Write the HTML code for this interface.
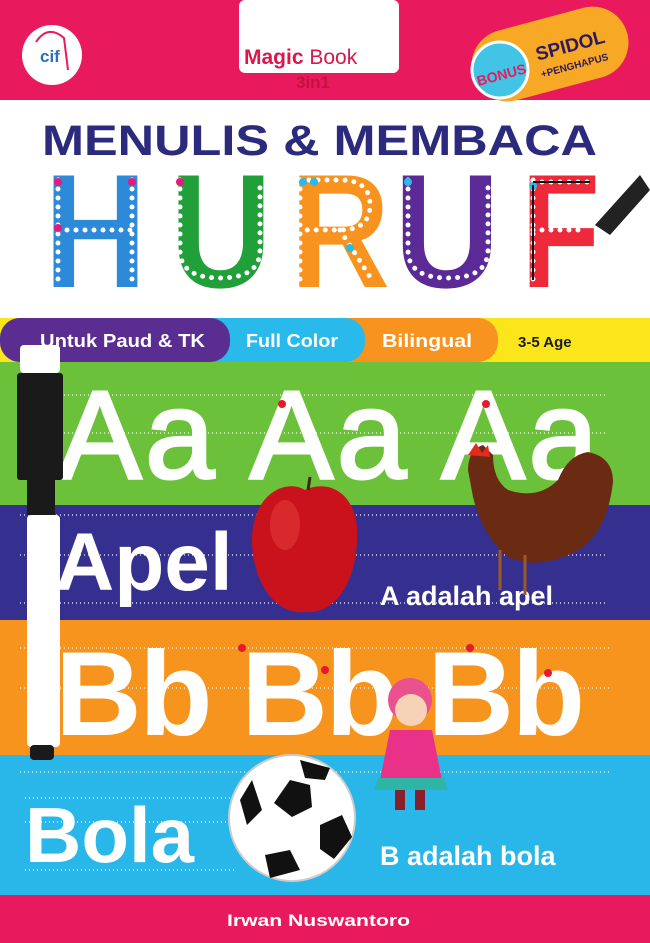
<!DOCTYPE html><html><head><meta charset="utf-8"><style>body{margin:0;width:650px;height:943px;overflow:hidden}svg{display:block}</style></head><body>
<svg width="650" height="943" viewBox="0 0 650 943" font-family="Liberation Sans, sans-serif">
<rect width="650" height="943" fill="#e8195d"/>
<rect x="0" y="100" width="650" height="220" fill="#fff"/>
<!-- logo -->
<circle cx="52" cy="55" r="30" fill="#fff"/>
<path d="M36 42 q12 -18 28 -4 l4 32" fill="none" stroke="#e8195d" stroke-width="2"/>
<text x="40" y="62" font-size="17" font-weight="bold" fill="#2c6fc0">cif</text>
<!-- magic book -->
<rect x="239" y="0" width="160" height="73" rx="6" fill="#fff"/>
<text x="244" y="64" font-size="21" fill="#d8174e" font-weight="bold">Magic <tspan font-weight="normal">Book</tspan></text>
<text x="296" y="88" font-size="17" font-weight="bold" fill="#c8103e">3in1</text>
<!-- bonus -->
<rect x="470" y="18" width="160" height="72" rx="36" fill="#f7a824" transform="rotate(-15 550 54)"/>
<circle cx="500" cy="70" r="28" fill="#41c4e5" stroke="#fff" stroke-width="3"/>
<text x="476" y="80" font-size="14" font-weight="bold" fill="#e8195d" transform="rotate(-15 500 74)">BONUS</text>
<text x="536" y="52" font-size="19" font-weight="bold" fill="#2b1a5e" transform="rotate(-15 570 50)">SPIDOL</text>
<text x="540" y="70" font-size="10" font-weight="bold" fill="#2b1a5e" transform="rotate(-15 570 66)">+PENGHAPUS</text>
<!-- title -->
<text x="42" y="155" font-size="43" font-weight="bold" fill="#2b2a7c" textLength="555" lengthAdjust="spacingAndGlyphs">MENULIS &amp; MEMBACA</text>
<g font-size="162" font-weight="bold" stroke-width="3">
<text x="44" y="287" fill="#2c8ad8" textLength="103" lengthAdjust="spacingAndGlyphs">H</text>
<text x="170" y="287" fill="#21a03a" textLength="102" lengthAdjust="spacingAndGlyphs">U</text>
<text x="290" y="287" fill="#f8931f" textLength="100" lengthAdjust="spacingAndGlyphs">R</text>
<text x="394" y="287" fill="#5c2a96" textLength="106" lengthAdjust="spacingAndGlyphs">U</text>
<text x="521" y="287" fill="#ee2a3a" textLength="79" lengthAdjust="spacingAndGlyphs">F</text>
</g>
<g stroke="#fff" stroke-width="5" stroke-dasharray="0 9" stroke-linecap="round" fill="none">
<path d="M58 180 V280 M132 180 V280 M58 230 H132 M180 180 V250 q0 28 40 28 q40 0 40 -28 V180 M300 180 V280 M300 180 H340 q30 0 30 25 q0 25 -30 25 H300 M340 230 L372 280 M408 180 V250 q0 28 40 28 q40 0 40 -28 V180 M533 180 V280 M533 182 H590 M533 230 H580"/>
</g>
<g fill="#e8197a"><circle cx="58" cy="182" r="4"/><circle cx="132" cy="182" r="4"/><circle cx="58" cy="228" r="4"/><circle cx="180" cy="182" r="4"/></g>
<g fill="#29b9eb"><circle cx="303" cy="182" r="4"/><circle cx="314" cy="182" r="4"/><circle cx="350" cy="248" r="4"/><circle cx="408" cy="182" r="4"/><circle cx="533" cy="186" r="4"/></g>
<path d="M533 185 V280 M533 182 H590" stroke="#111" stroke-width="2" fill="none"/>
<path d="M595 225 L640 175 L650 190 L610 235 Z" fill="#222"/>
<!-- label band -->
<rect x="0" y="318" width="650" height="44" fill="#fbe51b"/>
<rect x="0" y="318" width="498" height="44" rx="20" fill="#f7931e"/>
<rect x="0" y="318" width="365" height="44" rx="20" fill="#29b9eb"/>
<rect x="0" y="318" width="230" height="44" rx="20" fill="#5b2d91"/>
<g font-size="18" font-weight="bold">
<text x="40" y="347" fill="#fff" textLength="165" lengthAdjust="spacingAndGlyphs">Untuk Paud &amp; TK</text>
<text x="246" y="347" fill="#fff" textLength="92" lengthAdjust="spacingAndGlyphs">Full Color</text>
<text x="382" y="347" fill="#fff" textLength="90" lengthAdjust="spacingAndGlyphs">Bilingual</text>
<text x="518" y="347" fill="#1a1a1a" font-size="15">3-5 Age</text>
</g>
<!-- bands -->
<rect x="0" y="362" width="650" height="143" fill="#6cc13a"/>
<rect x="0" y="505" width="650" height="115" fill="#35308f"/>
<rect x="0" y="620" width="650" height="135" fill="#f7941d"/>
<rect x="0" y="755" width="650" height="140" fill="#29b7ea"/>
<g stroke="#fff" stroke-width="1.5" stroke-dasharray="1 3" opacity="0.8">
<path d="M20 395 H605 M20 433 H605 M20 515 H605 M20 555 H605 M20 603 H605 M20 648 H610 M20 688 H610 M20 772 H610 M25 798 H235 M25 822 H235 M25 870 H235"/>
</g>
<g fill="#fff" font-weight="bold">
<text x="58" y="478" font-size="125" textLength="540" lengthAdjust="spacing" font-weight="normal" stroke="#fff" stroke-width="3">Aa Aa Aa</text>
<text x="55" y="590" font-size="82">Apel</text>
<text x="380" y="605" font-size="27">A adalah apel</text>
<text x="55" y="735" font-size="120" textLength="530" lengthAdjust="spacing">Bb Bb Bb</text>
<text x="25" y="862" font-size="78">Bola</text>
<text x="380" y="865" font-size="27">B adalah bola</text>
</g>
<g fill="#e8192c"><circle cx="282" cy="404" r="4"/><circle cx="486" cy="404" r="4"/><circle cx="242" cy="648" r="4"/><circle cx="470" cy="648" r="4"/><circle cx="325" cy="670" r="4"/><circle cx="548" cy="673" r="4"/></g>
<!-- apple -->
<path d="M305 490 C330 478 360 495 357 540 C355 590 330 615 305 612 C280 615 255 590 252 545 C250 495 285 478 305 490 Z" fill="#c9121b"/>
<ellipse cx="285" cy="525" rx="15" ry="25" fill="#e23a3a" opacity="0.6"/>
<path d="M308 490 L310 477" stroke="#3a2a10" stroke-width="3"/>
<!-- rooster -->
<path d="M468 470 q0 -20 15 -25 l10 10 q0 25 15 35 q30 10 50 -10 q10 -25 30 -28 q25 5 25 30 q-5 45 -30 65 q-40 25 -75 10 q-25 -20 -35 -60 Z" fill="#6b2a12"/>
<path d="M468 455 l8 -12 l6 10 l6 -8 l2 12 z" fill="#e52a1f"/>
<path d="M500 550 v40 M525 555 v40" stroke="#9a5a20" stroke-width="3"/>
<!-- doll -->
<circle cx="410" cy="700" r="22" fill="#e9518f"/>
<circle cx="411" cy="710" r="16" fill="#f6d3b6"/>
<path d="M390 730 h42 l12 60 h-66 z" fill="#e9318a"/>
<path d="M378 778 h66 l4 12 h-74 z" fill="#2fb5a5"/>
<rect x="395" y="790" width="10" height="20" fill="#8a1e2a"/><rect x="415" y="790" width="10" height="20" fill="#8a1e2a"/>
<!-- ball -->
<circle cx="292" cy="818" r="63" fill="#fff" stroke="#ccc" stroke-width="2"/>
<g fill="#111"><path d="M290 780 l20 5 l2 22 l-20 10 l-18 -14 z"/><path d="M240 800 l12 -20 l10 30 l-15 15 z"/><path d="M320 825 l22 -10 l10 22 l-18 22 l-14 -10 z"/><path d="M265 855 l25 -5 l10 20 l-30 8 z"/><path d="M300 760 l30 8 l-5 12 l-20 -2 z"/></g>
<!-- marker -->
<rect x="20" y="345" width="40" height="28" rx="4" fill="#fff"/>
<rect x="17" y="373" width="46" height="107" rx="3" fill="#1a1a1a"/>
<rect x="27" y="480" width="28" height="35" fill="#1a1a1a"/>
<rect x="27" y="515" width="33" height="232" rx="4" fill="#fff"/>
<rect x="30" y="745" width="24" height="15" rx="4" fill="#1a1a1a"/>
<text x="227" y="926" font-size="17" font-weight="bold" fill="#fff" textLength="183" lengthAdjust="spacingAndGlyphs">Irwan Nuswantoro</text>
</svg>
</body></html>
